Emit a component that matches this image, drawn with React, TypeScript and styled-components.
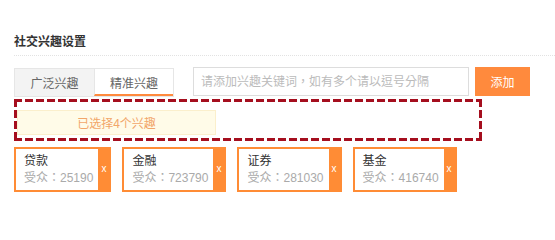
import React from "react";
import styled, { createGlobalStyle } from "styled-components";

const GlobalStyle = createGlobalStyle`
  html, body { margin: 0; padding: 0; background: #ffffff; }
  body { font-family: "Liberation Sans", "Noto Sans CJK SC", sans-serif; font-size: 12px; }
  * { box-sizing: border-box; }
`;

const Page = styled.div`
  padding: 33px 0 0 14px;
  width: 555px;
`;

const Title = styled.div`
  font-size: 12px;
  line-height: 18px;
  font-weight: bold;
  color: #333333;
`;

const Separator = styled.div`
  margin-top: 4px;
  border-top: 1px dotted #e2e2e2;
`;

const Toolbar = styled.div`
  display: flex;
  align-items: flex-start;
  margin-top: 11px;
`;

const Tabs = styled.div`
  display: flex;
  margin-top: 1px;
  border: 1px solid #e6e6e6;
  height: 29px;
`;

const Tab = styled.div<{ $active?: boolean }>`
  width: 79px;
  height: 27px;
  display: flex;
  align-items: center;
  justify-content: center;
  font-size: 12px;
  color: #666666;
  background: ${(p) => (p.$active ? "#ffffff" : "#f3f3f3")};
  border-left: ${(p) => (p.$active ? "1px solid #e6e6e6" : "none")};
  border-bottom: 2px solid ${(p) => (p.$active ? "#ff8a3d" : "transparent")};
  padding-top: 2px;
`;

const KeywordInput = styled.input`
  margin-left: 19px;
  width: 276px;
  height: 29px;
  border: 1px solid #dddddd;
  padding: 0 7px;
  font-family: "Liberation Sans", "Noto Sans CJK TC", sans-serif;
  font-size: 12px;
  color: #333333;
  outline: none;
  &::placeholder { color: #bbbbbb; }
`;

const AddButton = styled.button`
  margin-left: 6px;
  width: 55px;
  height: 29px;
  border: none;
  background: #ff8a3d;
  color: #ffffff;
  font-family: "Liberation Sans", "Noto Sans CJK SC", sans-serif;
  font-size: 12px;
  padding: 0;
`;

const dash = "#a50e1e";

const Highlight = styled.div`
  margin-top: 2px;
  width: 468px;
  height: 42px;
  padding: 11px 3px 3px 3px;
  background:
    repeating-linear-gradient(90deg, ${dash} 0 8px, transparent 8px 11px) top left / 100% 3px no-repeat,
    repeating-linear-gradient(90deg, ${dash} 0 8px, transparent 8px 11px) bottom left / 100% 3px no-repeat,
    repeating-linear-gradient(180deg, ${dash} 0 8px, transparent 8px 11px) top left / 3px 100% no-repeat,
    repeating-linear-gradient(180deg, ${dash} 0 8px, transparent 8px 11px) top right / 3px 100% no-repeat;
`;

const Notice = styled.div`
  width: 199px;
  height: 25px;
  display: flex;
  align-items: center;
  justify-content: center;
  background: #fffbe8;
  border: 1px solid #fbefcc;
  color: #f2a66a;
  font-size: 12px;
`;

const TagRow = styled.div`
  display: flex;
  gap: 11px;
  margin-top: 6px;
`;

const Tag = styled.div`
  display: flex;
  height: 45px;
  border: 2px solid #ff8c35;
  background: #ffffff;
`;

const TagBody = styled.div`
  padding: 4px 5px 3px 8px;
  display: flex;
  flex-direction: column;
`;

const TagName = styled.div`
  font-size: 12px;
  line-height: 17px;
  color: #333333;
`;

const TagAudience = styled.div`
  font-family: "Liberation Sans", "Noto Sans CJK TC", sans-serif;
  font-size: 12px;
  line-height: 17px;
  color: #aaaaaa;
  white-space: nowrap;
`;

const RemoveStrip = styled.div`
  width: 11px;
  background: #ff8c35;
  color: #ffffff;
  font-size: 10px;
  display: flex;
  align-items: center;
  justify-content: center;
  padding-bottom: 2px;
`;

const tags = [
  { name: "贷款", count: "25190" },
  { name: "金融", count: "723790" },
  { name: "证券", count: "281030" },
  { name: "基金", count: "416740" },
];

export default function App() {
  return (
    <>
      <GlobalStyle />
      <Page>
        <Title>社交兴趣设置</Title>
        <Separator />
        <Toolbar>
          <Tabs>
            <Tab>广泛兴趣</Tab>
            <Tab $active>精准兴趣</Tab>
          </Tabs>
          <KeywordInput placeholder="请添加兴趣关键词，如有多个请以逗号分隔" />
          <AddButton>添加</AddButton>
        </Toolbar>
        <Highlight>
          <Notice>已选择4个兴趣</Notice>
        </Highlight>
        <TagRow>
          {tags.map((t) => (
            <Tag key={t.name}>
              <TagBody>
                <TagName>{t.name}</TagName>
                <TagAudience>受众：{t.count}</TagAudience>
              </TagBody>
              <RemoveStrip>x</RemoveStrip>
            </Tag>
          ))}
        </TagRow>
      </Page>
    </>
  );
}
